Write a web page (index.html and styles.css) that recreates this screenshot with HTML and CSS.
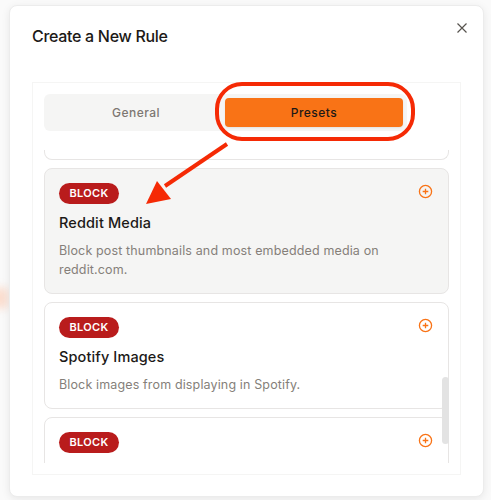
FILE: index.html
```html
<!DOCTYPE html>
<html lang="en">
<head>
<meta charset="utf-8">
<title>Create a New Rule</title>
<link rel="stylesheet" href="styles.css">
</head>
<body>
<div class="glow"></div>
<section class="modal">
  <header class="modal-head">
    <h1>Create a New Rule</h1>
    <svg class="close" viewBox="0 0 12 12" width="12" height="12"><path d="M1.5 1.5l9 9M10.5 1.5l-9 9"/></svg>
  </header>
  <div class="panel">
    <div class="tabs">
      <div class="tab">General</div>
      <div class="tab active">Presets</div>
    </div>
    <div class="list">
      <div class="card stub"></div>
      <article class="card hover">
        <div class="card-top"><span class="badge">BLOCK</span>
          <svg class="plus" viewBox="0 0 16 16" width="15" height="15"><circle cx="8" cy="8" r="6.5"/><path d="M8 5v6M5 8h6"/></svg></div>
        <h2>Reddit Media</h2>
        <p>Block post thumbnails and most embedded media on reddit.com.</p>
      </article>
      <article class="card">
        <div class="card-top"><span class="badge">BLOCK</span>
          <svg class="plus" viewBox="0 0 16 16" width="15" height="15"><circle cx="8" cy="8" r="6.5"/><path d="M8 5v6M5 8h6"/></svg></div>
        <h2>Spotify Images</h2>
        <p>Block images from displaying in Spotify.</p>
      </article>
      <article class="card open">
        <div class="card-top"><span class="badge">BLOCK</span>
          <svg class="plus" viewBox="0 0 16 16" width="15" height="15"><circle cx="8" cy="8" r="6.5"/><path d="M8 5v6M5 8h6"/></svg></div>
      </article>
      <div class="thumb"></div>
    </div>
  </div>
</section>
<svg class="marks" viewBox="0 0 491 500" width="491" height="500">
  <rect class="ring" x="217" y="84" width="196" height="55" rx="25"/>
  <path class="arrow-line" d="M227 144L165 186"/>
  <path class="arrow-head" d="M146 204L157 181L171 199Z"/>
</svg>
</body>
</html>
```
FILE: styles.css
```css
* { box-sizing: border-box; }
html, body { margin: 0; height: 100%; }
body {
  width: 491px;
  height: 500px;
  overflow: hidden;
  position: relative;
  background: #fafafa;
  font-family: Inter, "Liberation Sans", sans-serif;
  padding: 5px 7px 3px 9px;
}
.glow {
  position: absolute;
  left: -8px;
  top: 288px;
  width: 16px;
  height: 20px;
  background: #fbdccd;
  filter: blur(4px);
}
.modal {
  position: relative;
  height: 492px;
  background: #fff;
  border: 1px solid #ececec;
  border-radius: 8px;
  box-shadow: 0 2px 8px rgba(0,0,0,.08);
  padding: 0 22px;
}
.modal-head {
  height: 76px;
  display: flex;
  justify-content: space-between;
  align-items: flex-start;
}
h1 {
  margin: 20px 0 0;
  font-size: 16px;
  line-height: 20px;
  font-weight: 500;
  letter-spacing: -.3px;
  color: #1c1917;
}
.close { margin: 16px -7px 0 0; fill: none; stroke: #57534e; stroke-width: 1.2; }
.panel {
  height: 393px;
  border: 1px solid #f5f5f4;
  padding: 11px;
  display: flex;
  flex-direction: column;
}
.tabs {
  width: 363px;
  height: 37px;
  flex: none;
  display: grid;
  grid-template-columns: 178px 178px;
  padding: 4px 4px 4px 3px;
  background: #f5f5f4;
  border-radius: 6px;
}
.tab {
  display: flex;
  align-items: center;
  justify-content: center;
  font-size: 12px;
  font-weight: 500;
  letter-spacing: .45px;
  color: #7d7772;
  border-radius: 4px;
}
.tab.active { background: #f97316; color: #1c1917; box-shadow: 0 1px 2px rgba(0,0,0,.08); }
.list {
  position: relative;
  flex: 1;
  min-height: 0;
  overflow: hidden;
  display: flex;
  flex-direction: column;
  gap: 8px;
}
.card {
  flex: none;
  border: 1px solid #e7e5e4;
  border-radius: 8px;
  padding: 14px;
  background: #fff;
}
.card.stub {
  height: 10px;
  margin-top: 19px;
  padding: 0;
  border-top: 0;
  border-top-left-radius: 0;
  border-top-right-radius: 0;
}
.card.hover { background: #f5f5f4; }
.card.open { height: 80px; }
.card-top { display: flex; justify-content: space-between; align-items: flex-start; }
.badge {
  display: block;
  width: 60px;
  height: 21px;
  border-radius: 11px;
  background: #b91c1c;
  color: #fff;
  font-size: 11px;
  line-height: 21px;
  font-weight: 600;
  text-align: center;
  letter-spacing: .3px;
}
.plus { margin: 1px 1px 0 0; fill: none; stroke: #f97316; stroke-width: 1.4; }
h2 {
  margin: 9px 0 0;
  font-size: 14.500px;
  line-height: 20px;
  font-weight: 500;
  letter-spacing: .12px;
  color: #1c1917;
}
p {
  margin: 8px 0 0;
  font-size: 12.500px;
  line-height: 19px;
  letter-spacing: .14px;
  color: #857f7a;
}
.thumb {
  position: absolute;
  right: 0;
  top: 246px;
  width: 7px;
  height: 67px;
  border-radius: 4px;
  background: #e3e3e3;
}
.marks { position: absolute; left: 0; top: 0; pointer-events: none; }
.ring { fill: none; stroke: #f52a05; stroke-width: 4; }
.arrow-line { fill: none; stroke: #f52a05; stroke-width: 4; }
.arrow-head { fill: #f52a05; }
```
